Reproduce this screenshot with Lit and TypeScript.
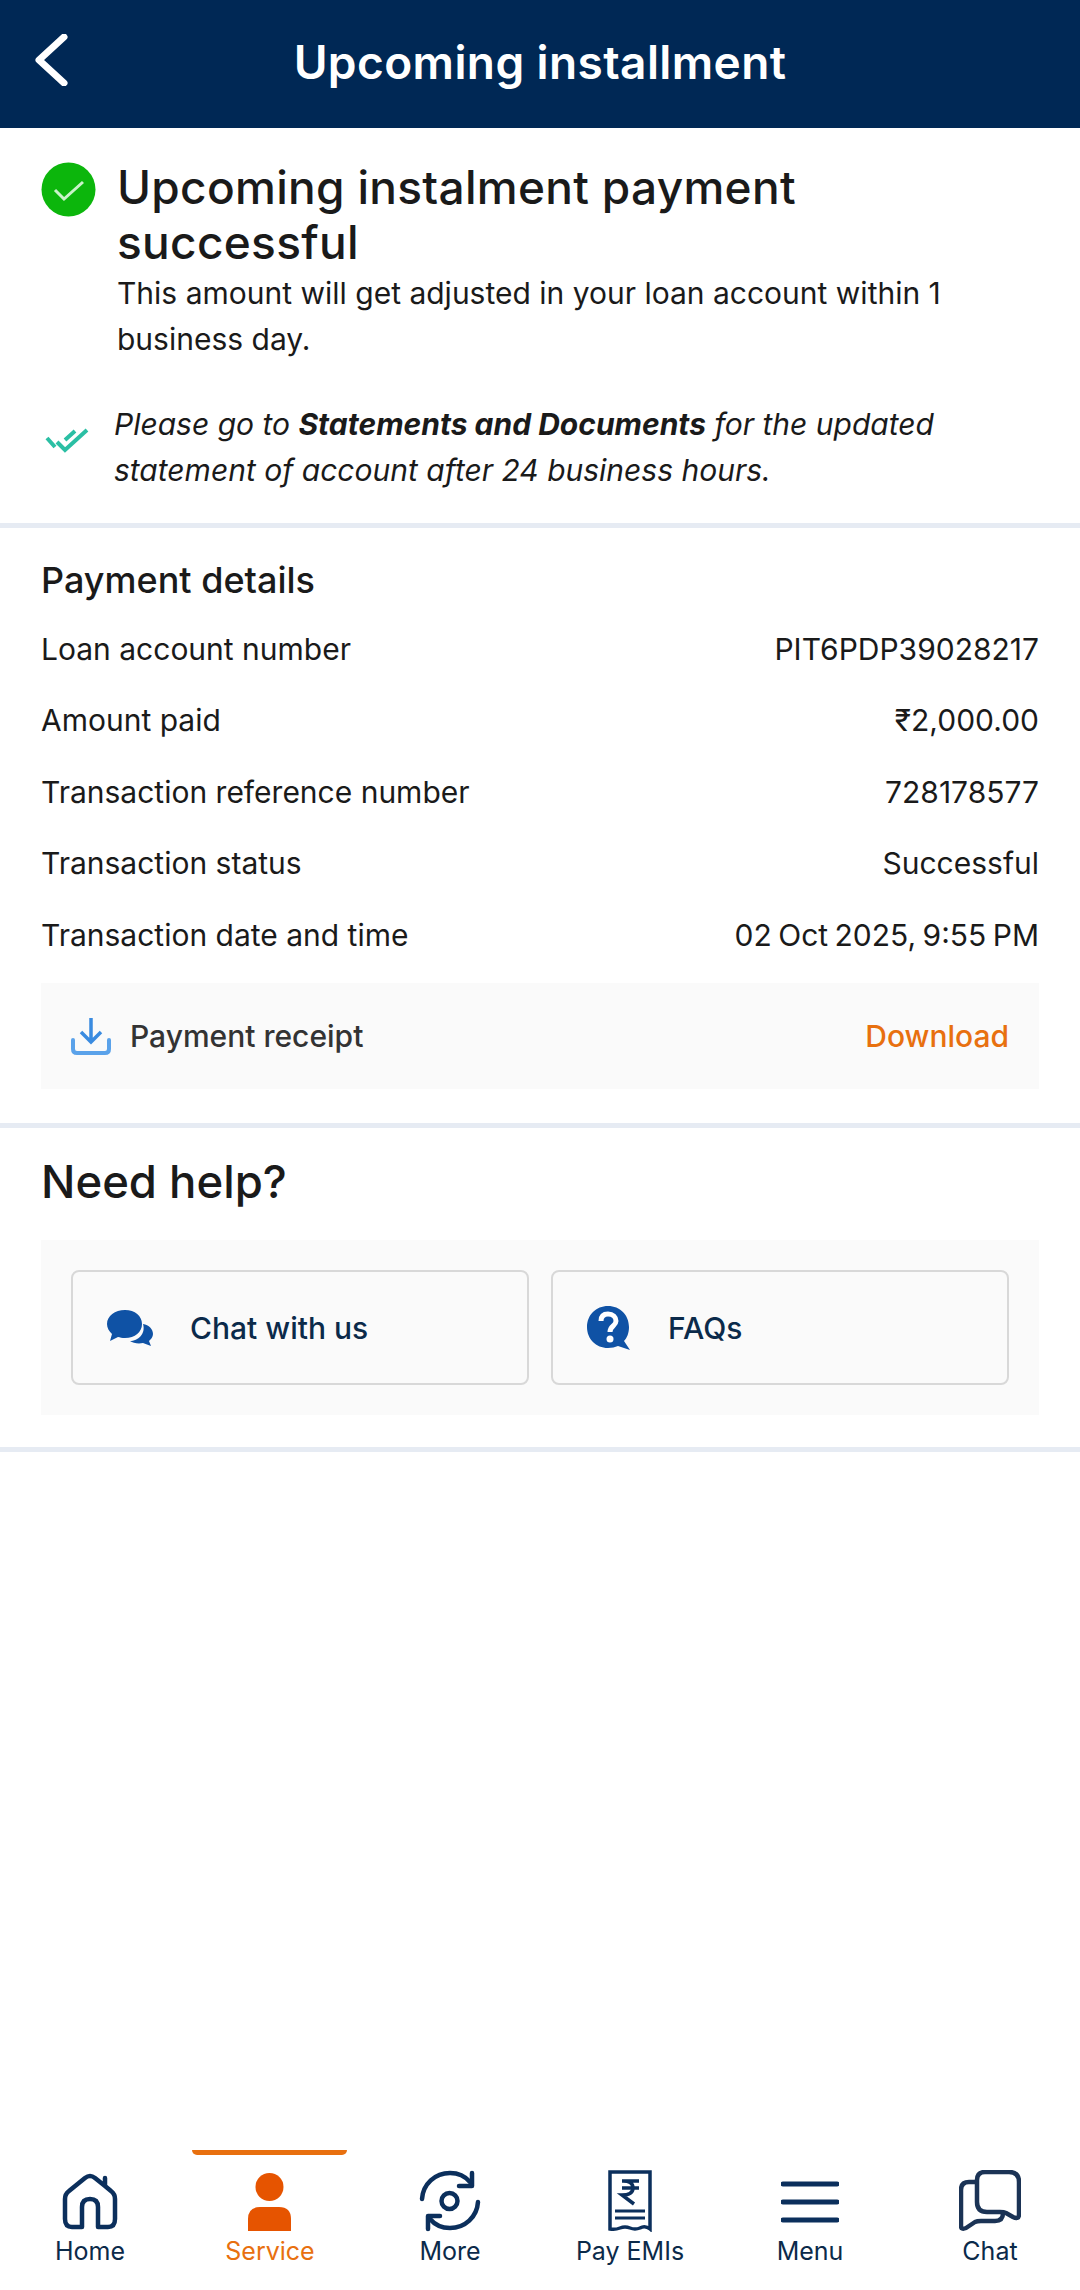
import { LitElement, html, css } from "lit";
import { customElement } from "lit/decorators.js";

const rows: [string, string][] = [
  ["Loan account number", "PIT6PDP39028217"],
  ["Amount paid", "₹2,000.00"],
  ["Transaction reference number", "728178577"],
  ["Transaction status", "Successful"],
  ["Transaction date and time", "02 Oct 2025, 9:55 PM"],
];

@customElement("app-root")
export class AppRoot extends LitElement {
  static styles = css`
    :host { display: flex; flex-direction: column; width: 1080px; height: 2290px; background: #fff; font-family: Inter, "Noto Sans", sans-serif; color: #1a1a1a; overflow: hidden; }
    svg { display: block; flex: none; }
    .header { height: 128px; flex: none; background: #002855; position: relative; display: flex; align-items: center; justify-content: center; color: #fff; font-size: 46px; letter-spacing: 0.4px; font-weight: 600; padding-bottom: 4px; box-sizing: border-box; }
    .back { position: absolute; left: 34px; top: 34px; }
    .success { padding: 32px 41px 0; display: flex; gap: 21px; }
    .success svg { margin-top: 2px; }
    .success h1 { margin: 0; width: 760px; font-size: 46px; letter-spacing: 0.3px; line-height: 55px; font-weight: 500; color: #1a1a1a; }
    .success p { margin: 0; font-size: 30px; line-height: 46px; }
    .note-wrap { height: 161px; flex: none; }
    .note { padding: 39px 41px 0; display: flex; align-items: center; gap: 24px; }
    .note svg { margin-bottom: 14px; }
    .note p { margin: 0; font-size: 30px; line-height: 46px; font-style: italic; }
    .note b { font-weight: 700; }
    .divider { height: 5px; flex: none; background: #e6ebf3; }
    .details { padding: 31px 41px 0; height: 595px; box-sizing: border-box; flex: none; }
    .details h2 { margin: 0 0 12px; font-size: 36px; line-height: 42px; font-weight: 500; }
    .row { display: flex; justify-content: space-between; align-items: center; height: 71.5px; font-size: 30px; }
    .row .v { word-spacing: -2px; }
    .receipt { margin-top: 12px; height: 106px; background: #fafafa; display: flex; align-items: center; padding: 0 30px; font-size: 30px; font-weight: 500; color: #333; }
    .receipt span.l { margin-left: 19px; flex: 1; }
    .receipt span.d { color: #e8700f; }
    .help { padding: 27px 41px 0; height: 319px; box-sizing: border-box; flex: none; }
    .help h2 { margin: 0 0 31px; font-size: 45.5px; line-height: 54px; font-weight: 500; }
    .help-box { height: 175px; background: #fafafa; padding: 30px; box-sizing: border-box; display: flex; gap: 22px; }
    .card { flex: 1; border: 2px solid #d8d8d8; border-radius: 8px; display: flex; align-items: center; padding-left: 34px; gap: 37px; font-size: 30px; font-weight: 500; color: #0b2a4a; }
    .spacer { flex: 1; }
    .nav { height: 140px; flex: none; display: grid; grid-template-columns: repeat(6, 180px); }
    .item { position: relative; display: flex; flex-direction: column; align-items: center; padding-top: 20px; font-size: 25px; color: #0b2a4a; box-sizing: border-box; }
    .item svg { height: 62px; }
    .item span { margin-top: 3px; line-height: 32px; }
    .item.active { color: #e8700f; }
    .item.active::before { content: ""; position: absolute; top: 0; left: 12px; width: 155px; height: 5px; background: #e8700f; border-radius: 0 0 6px 6px; }
  `;

  render() {
    return html`
      <div class="header">
        <svg class="back" width="34" height="52" viewBox="0 0 34 52"><path d="M30 3 L5 26 L30 49" fill="none" stroke="#fff" stroke-width="7" stroke-linecap="round" stroke-linejoin="round"/></svg>
        Upcoming installment
      </div>
      <div class="success">
        <svg width="55" height="55" viewBox="0 0 55 55"><circle cx="27.5" cy="27.5" r="27" fill="#0cb60c"/><path d="M14 28 L23 37 L42 20" fill="none" stroke="#c9f3c9" stroke-width="3"/></svg>
        <div>
          <h1>Upcoming instalment payment successful</h1>
          <p>This amount will get adjusted in your loan account within 1 business day.</p>
        </div>
      </div>
      <div class="note-wrap">
        <div class="note">
          <svg width="49" height="30" viewBox="0 0 49 30"><path d="M6 13 L14 22 M16 17 L24 25 L46 5 M24 15 L34 6" fill="none" stroke="#2bbfa4" stroke-width="4"/></svg>
          <p>Please go to <b>Statements and Documents</b> for the updated statement of account after 24 business hours.</p>
        </div>
      </div>
      <div class="divider"></div>
      <div class="details">
        <h2>Payment details</h2>
        ${rows.map(([a, b]) => html`<div class="row"><span>${a}</span><span class="v">${b}</span></div>`)}
        <div class="receipt">
          <svg width="40" height="38" viewBox="0 0 40 38"><path d="M20 1 V24 M10 15 L20 25 L30 15" fill="none" stroke="#3a8be0" stroke-width="3.5"/><path d="M2 23 V32 Q2 36 6 36 H34 Q38 36 38 32 V23" fill="none" stroke="#5aa2ea" stroke-width="4" stroke-linecap="round"/></svg>
          <span class="l">Payment receipt</span><span class="d">Download</span>
        </div>
      </div>
      <div class="divider"></div>
      <div class="help">
        <h2>Need help?</h2>
        <div class="help-box">
          <div class="card">
            <svg width="46" height="36" viewBox="0 0 46 36"><path d="M36 14 C42 15 46 19 46 24 C46 27 44 29 42 31 L44 36 L36 33 C31 34 26 33 23 31 C31 31 39 24 36 14 Z" fill="#0f52a5"/><path d="M18 0 C28 0 35 6 35 14 C35 22 28 28 18 28 C15 28 13 27.5 11 27 L3 31 L5 24 C2 21 0 18 0 14 C0 6 8 0 18 0 Z" fill="#0f52a5"/></svg>
            Chat with us
          </div>
          <div class="card">
            <svg width="44" height="44" viewBox="0 0 44 44"><path d="M21 0 C33 0 42 9 42 21 C42 27 40 32 37 35 L43 44 L31 40 C28 41 25 42 21 42 C9 42 0 33 0 21 C0 9 9 0 21 0 Z" fill="#0f52a5"/><path d="M14 15 C14 10 17 8 21 8 C26 8 29 11 29 15 C29 20 23 20 23 26" fill="none" stroke="#fff" stroke-width="5"/><circle cx="23" cy="33" r="3.5" fill="#fff"/></svg>
            FAQs
          </div>
        </div>
      </div>
      <div class="divider"></div>
      <div class="spacer"></div>
      <div class="nav">
        <div class="item">
          <svg width="56" height="62" viewBox="0 -3 56 62"><path d="M20 54 H10 Q3 54 3 46 V26 Q3 21 7 18 L23 5 Q28 1 33 5 L43 13 V5 V13 L49 18 Q53 21 53 26 V46 Q53 54 46 54 H36 V34 Q36 26 28 26 Q20 26 20 34 Z" fill="none" stroke="#0b2f5c" stroke-width="4.5" stroke-linejoin="round"/></svg>
          <span>Home</span>
        </div>
        <div class="item active">
          <svg width="44" height="62" viewBox="0 0 44 62"><circle cx="21.5" cy="17" r="14" fill="#e65400"/><path d="M0 61 V49 Q0 37 12 37 H31 Q43 37 43 49 V61 Z" fill="#e65400"/></svg>
          <span>Service</span>
        </div>
        <div class="item">
          <svg width="62" height="62" viewBox="0 0 62 62"><g fill="none" stroke="#0b2f5c" stroke-width="4.5" stroke-linecap="round" stroke-linejoin="round"><path d="M3 29 C4 14 16 3 31 3 C39 3 46 6 51 12"/><path d="M53 3 V16 H40"/><path d="M59 32 C58 47 46 58 31 58 C23 58 16 55 11 49"/><path d="M9 59 V46 H21"/><circle cx="30.5" cy="31" r="8"/></g></svg>
          <span>More</span>
        </div>
        <div class="item">
          <svg width="44" height="62" viewBox="0 0 44 62"><path d="M2 2 H42 V59 Q37 55 32 58 Q27 60 22 58 Q17 56 12 58 Q7 60 2 59 Z" fill="none" stroke="#0b2f5c" stroke-width="3.5"/><path d="M14 11 H31 M14 18 H31 M15 11 Q25 11 25 18 Q25 25 14 25 L26 34" fill="none" stroke="#0b2f5c" stroke-width="3.5"/><path d="M7 41 H37 M7 48 H37" stroke="#0b2f5c" stroke-width="3"/></svg>
          <span>Pay EMIs</span>
        </div>
        <div class="item">
          <svg width="58" height="62" viewBox="0 0 58 62"><path d="M2 14 H56 M2 32 H56 M2 50 H56" stroke="#0b2f5c" stroke-width="5" stroke-linecap="round"/></svg>
          <span>Menu</span>
        </div>
        <div class="item">
          <svg width="62" height="62" viewBox="0 0 62 62"><g fill="none" stroke="#1b3355" stroke-width="4.5" stroke-linejoin="round"><path d="M18 12 H10 Q2 12 2 20 V56 Q2 60 7 58 L16 52 Q18 51 22 51 H36 Q44 51 44 43"/><path d="M26 2 H50 Q60 2 60 12 V44 Q60 50 54 47 L47 43 Q45 42 41 42 H28 Q18 42 18 32 V10 Q18 2 26 2 Z"/></g></svg>
          <span>Chat</span>
        </div>
      </div>
    `;
  }
}
